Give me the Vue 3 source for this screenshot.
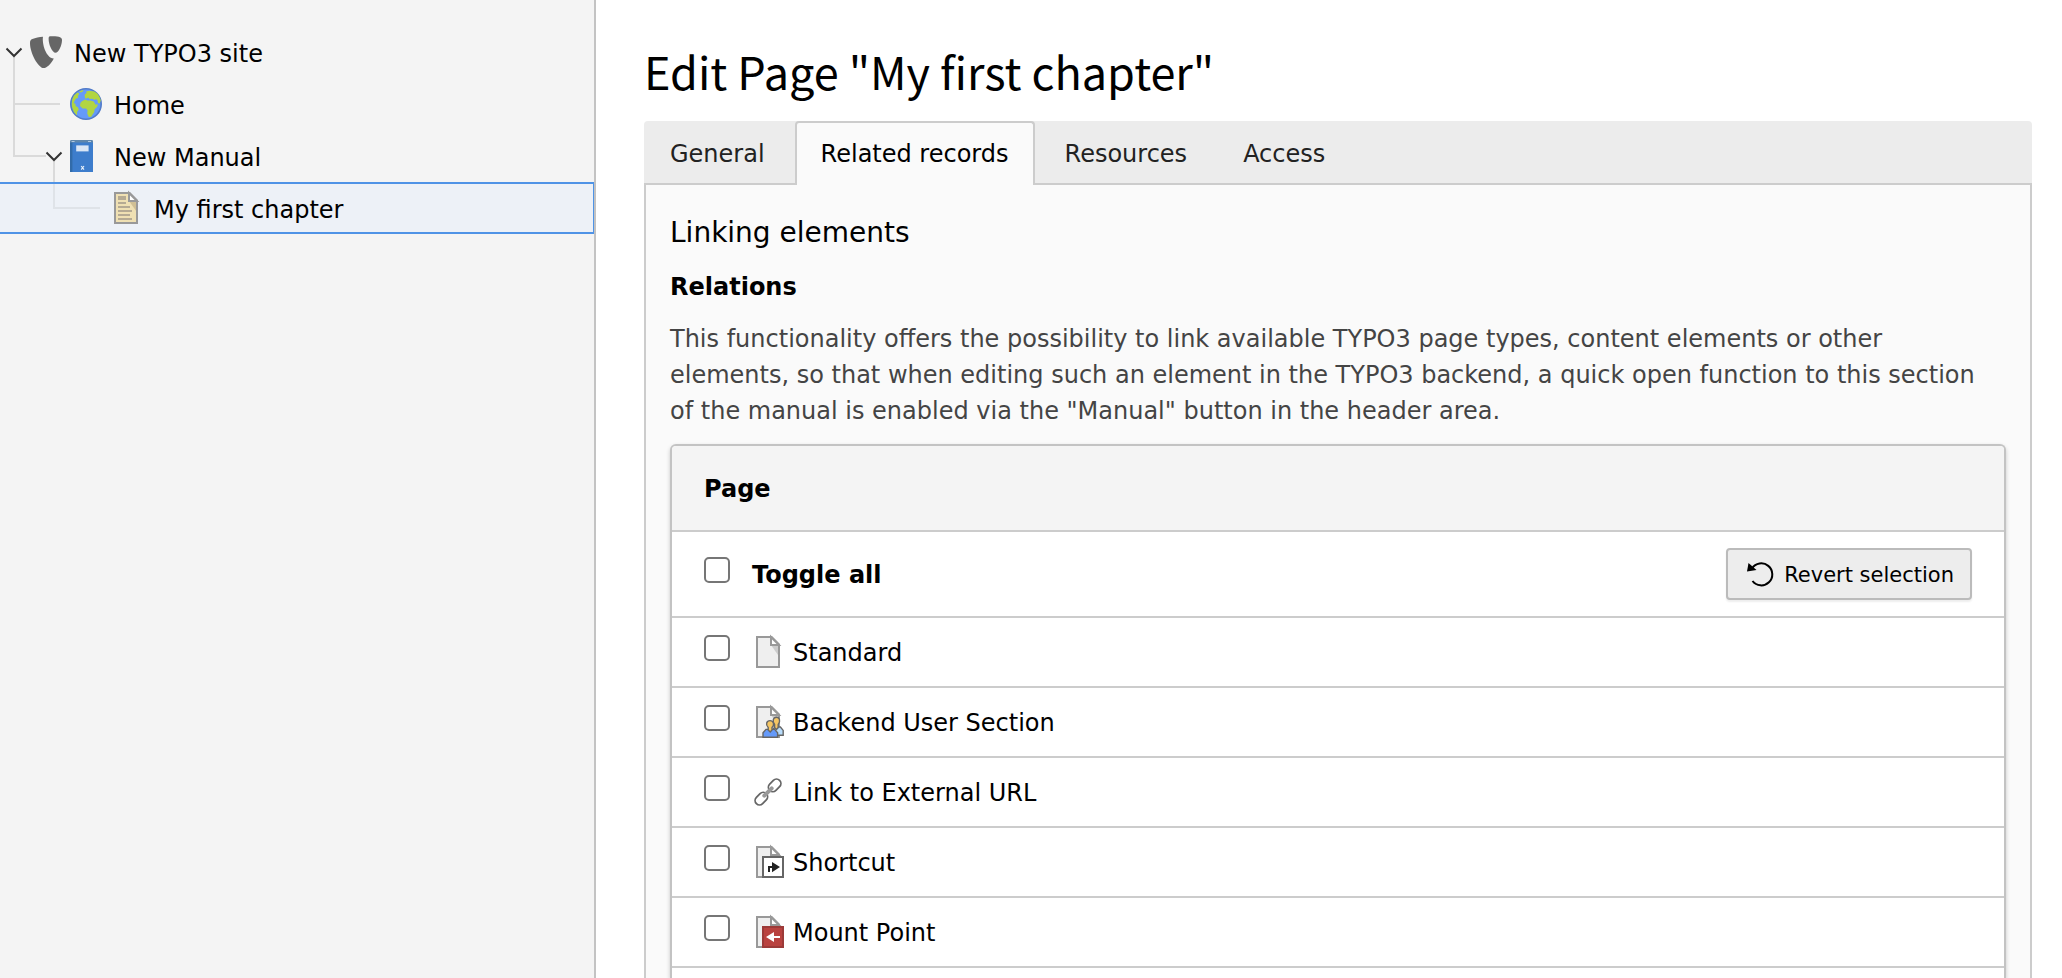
<script setup>
import { ref, computed } from 'vue'

const activeTab = ref('Related records')
const tabs = ['General', 'Related records', 'Resources', 'Access']

const tree = [
  { label: 'New TYPO3 site', icon: 'typo3', level: 0, open: true },
  { label: 'Home', icon: 'globe', level: 1 },
  { label: 'New Manual', icon: 'book', level: 1, open: true },
  { label: 'My first chapter', icon: 'chapter', level: 2, selected: true },
]

const options = [
  { id: 'standard', label: 'Standard', icon: 'page' },
  { id: 'backend-user', label: 'Backend User Section', icon: 'users' },
  { id: 'external', label: 'Link to External URL', icon: 'link' },
  { id: 'shortcut', label: 'Shortcut', icon: 'shortcut' },
  { id: 'mount', label: 'Mount Point', icon: 'mount' },
]

const checked = ref([])
const allChecked = computed({
  get: () => checked.value.length === options.length,
  set: (on) => { checked.value = on ? options.map((o) => o.id) : [] },
})
const revert = () => { checked.value = [] }
</script>

<template>
  <div class="backend">
    <aside class="sidebar">
      <nav class="tree" aria-label="Page tree">
        <svg class="guides" width="110" height="208" viewBox="0 0 110 208" fill="none" stroke-width="2" aria-hidden="true">
          <path d="M14 31V130H46M14 78H60" stroke="#dadada" />
          <path d="M54 135V156" stroke="#dadada" />
          <path d="M54 158V182H100" stroke="#dfe3e8" />
        </svg>
        <a
          v-for="node in tree"
          :key="node.label"
          href="#"
          class="node"
          :class="['level-' + node.level, { selected: node.selected }]"
        >
          <svg class="chevron" viewBox="0 0 18 18" aria-hidden="true">
            <path v-if="node.open" d="M1.500 5.500L9 13l7.500-7.500" fill="none" stroke="#333" stroke-width="2" />
          </svg>
          <svg class="icon" viewBox="0 0 16 16" aria-hidden="true">
            <g v-if="node.icon === 'typo3'" fill="#666">
              <path d="M0 3.600C0 2.400.3 1.800 1.200 1.500 2.700.9 4.600.5 6.500.4 5.900 3.600 8 11.300 11.900 11.200 10.600 14 8.200 16 6.800 16 4.200 16 0 8.600 0 3.600z" />
              <path d="M9.300 1.400C9.300.4 9.600.1 10.400.1 13.500.1 16 .3 16 1.900c0 3.300-2 6.500-3.200 6.500C11 8.400 9.300 4.200 9.300 1.400z" />
            </g>
            <g v-else-if="node.icon === 'globe'">
              <circle cx="8" cy="8" r="7.600" fill="#659afa" stroke="#527bc8" stroke-width=".8" />
              <path fill="#b1d541" d="M7.300 3.400l1-1L8 1.800l1.600-.4 2.600.3 1.600 1.200 1.100 1.900.5 1.500-.6 1.400-.8-.2-.3-1.500-.8-.5-.5.5-1.400-.6-1.200.1-.7-.8-.7.500-.9-.1z" />
              <path fill="#b1d541" d="M6 6.600l1.500-.8 1.200.5 1.500-.1 1.700.5.8 1.600 1.300-.1-.5 1.300-1.200 1.100-.2 1.500-.8 1.100-.7 1.200-1.200.1-.8-1.700.2-1.600-.8-1-1.700.1-1.300-1.300.2-1.500z" />
              <path fill="#b1d541" d="M1.100 5.800l.9-2 1.700-1.500.9.400-.2.700-.5.600.2.900-1.200.5-.6 1-.5 1.200.8.200.3 1.300.9.400.6 1.300-.8 1.100-.2 1.900-1.500-1.900L1 9.400.900 7.800z" />
              <path fill="#b1d541" d="M4.500 1.800l1.900-.8.300.5-1.200.8z" />
            </g>
            <g v-else-if="node.icon === 'book'">
              <path fill="#3d7dcc" d="M0 .8h11.500V16H0z" />
              <path fill="#326ba9" d="M0 .8h1.200V16H0z" />
              <path fill="#5f87ac" d="M.3 0h10.900l.3.500v.7H0V.500z" />
              <path fill="#cfe0f0" d="M.8.500h1.500v.4H.8zM9 .5h1.500v.4H9z" />
              <path fill="#dae6f5" d="M3.100 2.700h6.200v3H3.100z" />
              <path d="M5.600 13l1.400 1.800M7 13l-1.400 1.800" stroke="#e7f0fa" stroke-width=".6" />
            </g>
            <g v-else>
              <path fill="#efe0b3" stroke="#999" d="M2.500.5h7.300l3.700 3.700v11.300h-11z" />
              <path fill="#d0bf94" d="M9.500 4.500H13v4.900z" />
              <path fill="#fff" stroke="#999" d="M9.500.5v4h4z" />
              <path fill="#b5aa93" d="M4 2h4v2H4zM4 5h4v1H4zM4 7h6v1H4zM4 9h7v1H4zM4 11h6v1H4zM4 13h7v1H4z" />
            </g>
          </svg>
          <span>{{ node.label }}</span>
        </a>
      </nav>
    </aside>

    <main class="content">
      <h1>Edit Page "My first chapter"</h1>

      <div class="tabs" role="tablist">
        <button
          v-for="tab in tabs"
          :key="tab"
          type="button"
          role="tab"
          class="tab"
          :class="{ active: tab === activeTab }"
          :aria-selected="tab === activeTab"
          @click="activeTab = tab"
        >{{ tab }}</button>
      </div>

      <section class="panel">
        <h2>Linking elements</h2>
        <h3>Relations</h3>
        <p>This functionality offers the possibility to link available TYPO3 page types, content elements or other elements, so that when editing such an element in the TYPO3 backend, a quick open function to this section of the manual is enabled via the "Manual" button in the header area.</p>

        <div class="card">
          <h4 class="row card-head"><span>Page</span></h4>
          <div class="row toggle">
            <input id="toggle-all" v-model="allChecked" type="checkbox">
            <label for="toggle-all"><span>Toggle all</span></label>
            <button type="button" class="revert" @click="revert">
              <svg class="icon" viewBox="0 0 32 32" aria-hidden="true">
                <path d="M8 10.500A11 11 0 1 1 8.500 23" fill="none" stroke="#000" stroke-width="2" />
                <path d="M4.500 5l8 7L3 13.500z" />
              </svg>
              <span>Revert selection</span>
            </button>
          </div>
          <div v-for="option in options" :key="option.id" class="row option">
            <input :id="option.id" v-model="checked" :value="option.id" type="checkbox">
            <label :for="option.id">
              <svg class="icon" viewBox="0 0 16 16" aria-hidden="true">
                <g v-if="option.icon !== 'link'">
                  <path fill="#efefef" stroke="#999" d="M2.500.5h7.300l3.700 3.700v11.300h-11z" />
                  <path fill="#ccc" d="M9.500 4.500H13v5z" />
                  <path fill="#fff" stroke="#999" d="M9.500.5v4h4z" />
                </g>
                <g v-if="option.icon === 'users'">
                  <path fill="#b8dcfb" stroke="#666" stroke-width=".7" d="M10 14.600v-2.400l1.500-1.700h2.700l1.400 1.700v2.400z" />
                  <path fill="#f5c563" stroke="#666" stroke-width=".7" d="M11.300 10.800V9.200c-1.300-1.600-.7-3.600.9-3.600s2.200 2 .9 3.600v1.600l-.9.900z" />
                  <path fill="#659afa" stroke="#666" stroke-width=".7" d="M5.500 15.600v-2.200l1.500-1.700h4.300l1.500 1.700v2.200z" />
                  <path fill="#f5c563" stroke="#666" stroke-width=".7" d="M8.100 12v-1.200C6.600 9.300 7.300 7.300 9 7.300s2.500 2 1 3.500V12l-.9 1z" />
                </g>
                <g v-else-if="option.icon === 'link'" transform="rotate(-45 8 8)" fill="none">
                  <rect x="-.2" y="5.800" width="7" height="4.400" rx="2.200" stroke="#666" stroke-width=".9" />
                  <rect x="9.200" y="5.800" width="7" height="4.400" rx="2.200" stroke="#666" stroke-width=".9" />
                  <path d="M5.400 8h5.200" stroke="#999" stroke-width="2" stroke-linecap="round" />
                </g>
                <g v-else-if="option.icon === 'shortcut'">
                  <path fill="#fff" stroke="#666" d="M5.500 5.500h10v10h-10z" />
                  <path fill="#222" d="M8 13v-3h2V8l4 2.500-4 2.600V11H9v2z" />
                </g>
                <g v-else-if="option.icon === 'mount'">
                  <path fill="#b9423f" stroke="#9c3a38" d="M5.500 5.500h10v10h-10z" />
                  <path fill="#fff" d="M7 10.500L11 8v2h3v1h-3v2z" />
                </g>
              </svg>
              <span>{{ option.label }}</span>
            </label>
          </div>
        </div>
      </section>
    </main>
  </div>
</template>

<style>
body {
  margin: 0;
}
</style>

<style scoped>
.backend {
  display: grid;
  grid-template-columns: 596px minmax(0, 1fr);
  height: 100vh;
  overflow: hidden;
  background: #fff;
  color: #000;
  font: 24px/36px Verdana, "DejaVu Sans", sans-serif;
}

.backend *,
.backend {
  box-sizing: border-box;
}

.sidebar {
  padding-top: 26px;
  border-right: 2px solid #c3c3c3;
  background: #f4f4f4;
}

.tree {
  position: relative;
  display: flex;
  flex-direction: column;
}

.guides {
  position: absolute;
  top: 0;
  left: 0;
  z-index: 1;
}

.node {
  display: flex;
  align-items: center;
  height: 52px;
  padding-left: 5px;
  border: 0 solid #4f93e6;
  color: #000;
  text-decoration: none;
}

.node span {
  padding-top: 4px;
}

.node.level-1 {
  padding-left: 45px;
}

.node.level-2 {
  padding-left: 85px;
}

.node.selected {
  border-width: 2px 1px 2px 0;
  background: #edf1f7;
}

.chevron {
  z-index: 2;
  width: 18px;
  height: 18px;
  margin-right: 7px;
}

.icon {
  flex: none;
  width: 32px;
  height: 32px;
  overflow: visible;
}

.node .icon {
  margin-right: 12px;
}

.content {
  display: flex;
  flex-direction: column;
  padding: 39px 30px 0 48px;
}

h1,
h2,
h3,
h4,
p {
  margin: 0;
}

h1 {
  margin-bottom: 18px;
  font: 45px/64px "Source Sans Pro", "Noto Sans CJK JP", sans-serif;
}

.tabs {
  display: flex;
  flex: none;
  gap: 4px;
  height: 64px;
  border-radius: 4px 4px 0 0;
  background: #ececec;
  box-shadow: inset 0 -2px #ccc;
}

.tab {
  padding: 0 24px;
  border: 2px solid transparent;
  border-bottom: 0;
  background: none;
  color: #222;
  font: inherit;
}

.tab.active {
  border-color: #ccc;
  border-radius: 4px 4px 0 0;
  background: #fafafa;
  color: #000;
}

.panel {
  display: flex;
  flex: 1 0 auto;
  flex-direction: column;
  padding: 30px 24px 0;
  border: solid #ccc;
  border-width: 0 2px;
  background: #fafafa;
}

h2 {
  margin-bottom: 18px;
  font-size: 28px;
  font-weight: 400;
}

h3 {
  margin-bottom: 16px;
  font-size: 24px;
}

p {
  margin-bottom: 15px;
  padding-right: 24px;
  color: #444;
}

.card {
  flex: 1;
  border: 2px solid #c3c3c3;
  border-bottom: 0;
  border-radius: 6px 6px 0 0;
  background: #fff;
  box-shadow: 0 2px 4px rgba(0, 0, 0, 0.2);
}

.row {
  display: flex;
  align-items: center;
  padding: 0 32px;
  border-bottom: 2px solid #ccc;
}

.row span {
  padding-top: 2px;
}

.card-head,
.toggle {
  height: 86px;
  font-size: 24px;
  font-weight: 700;
}

.card-head {
  border-radius: 4px 4px 0 0;
  background: #f4f4f4;
}

.option {
  height: 70px;
}

input {
  appearance: none;
  flex: none;
  width: 26px;
  height: 26px;
  margin: 0 22px 8px 0;
  border: 2px solid #767676;
  border-radius: 5px;
  background: #fff;
}

input:checked {
  background: #4f93e6;
}

label {
  display: flex;
  align-items: center;
  gap: 9px;
}

.revert {
  display: flex;
  align-items: center;
  gap: 8px;
  height: 52px;
  margin-left: auto;
  padding: 0 16px;
  border: 2px solid #bbb;
  border-radius: 4px;
  background: #ededed;
  box-shadow: 0 2px 2px rgba(0, 0, 0, 0.07);
  color: #000;
  font: 21px/32px Verdana, "DejaVu Sans", sans-serif;
}
</style>
